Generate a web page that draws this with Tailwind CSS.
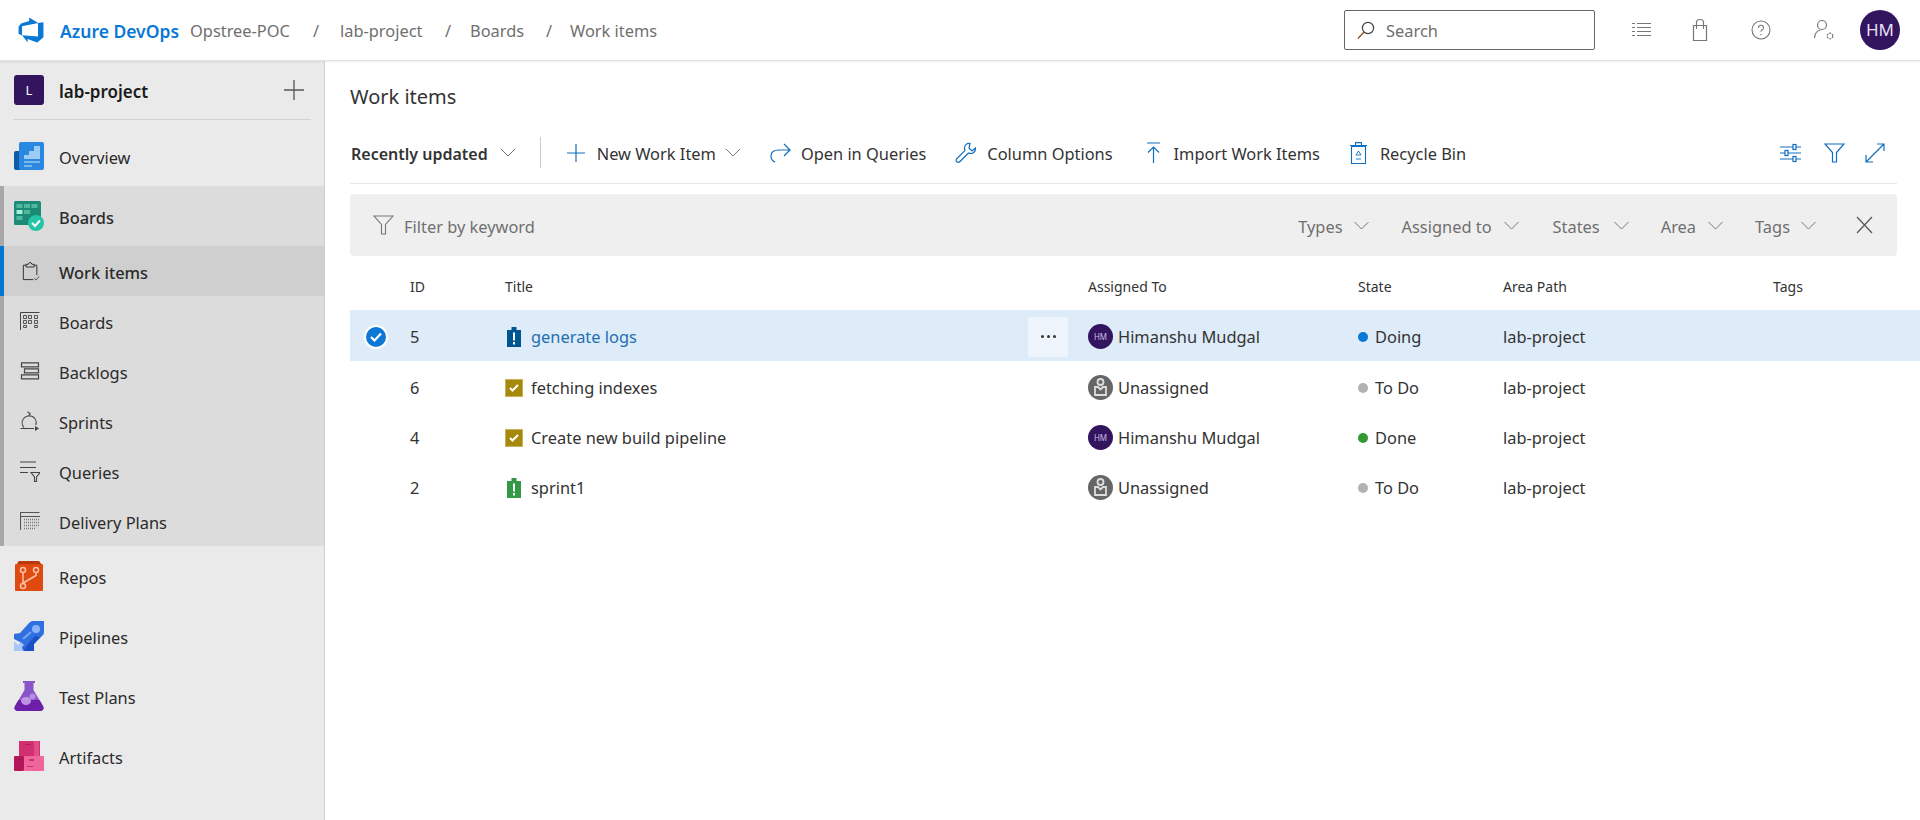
<!doctype html>
<html lang="en"><head><meta charset="utf-8"><title>Work items</title>
<script src="https://cdn.jsdelivr.net/npm/@tailwindcss/browser@4"></script></head>
<body class="h-screen overflow-hidden bg-white font-['Noto_Sans','Open_Sans',sans-serif] text-[#333] text-[16.4px] leading-[24px]">
<header class="h-[61px] flex items-center border-b border-[#e3e3e3] shadow-[0_1px_2px_rgba(0,0,0,0.08)] relative z-10 bg-white [&>span]:mt-[2px]">
  <svg class="ml-[17px] w-[28px] h-[28px]" viewBox="0 0 18 18"><path fill="#0a78d4" d="M17 4v9.74l-4 3.28-6.2-2.26V17L3.29 12.41l10.23.8V4.44Zm-3.41.49L7.85 1V3.29L2.58 4.84 1 6.87v4.61l2.26 1V6.57Z"/></svg>
  <span class="ml-[15px] w-[130px] font-semibold text-[#0a78d4] text-[17.5px] whitespace-nowrap">Azure DevOps</span>
  <span class="text-[#6f6f6f] w-[123px] whitespace-nowrap">Opstree-POC</span>
  <span class="text-[#6f6f6f] w-[27px]">/</span>
  <span class="text-[#6f6f6f] w-[105px] whitespace-nowrap">lab-project</span>
  <span class="text-[#6f6f6f] w-[25px]">/</span>
  <span class="text-[#6f6f6f] w-[76px]">Boards</span>
  <span class="text-[#6f6f6f] w-[24px]">/</span>
  <span class="text-[#6f6f6f] whitespace-nowrap">Work items</span>
  <div class="ml-auto w-[251px] h-[40px] border border-[#666] rounded-[2px] flex items-center pl-[11px] text-[#6f6f6f]">
    <svg class="w-[20px] h-[20px]" viewBox="0 0 20 20" fill="none" stroke="#444" stroke-width="1.2"><circle cx="12" cy="8" r="5.6"/><path d="M8 12 2 18.500" stroke="#8a4a20"/></svg>
    <span class="ml-[10px] mt-[2px]">Search</span>
  </div>
  <svg class="ml-[35px] w-[22px] h-[20px]" viewBox="0 0 22 20" fill="none" stroke="#777" stroke-width="1.2"><path d="M7 3.500h14M7 7.500h14M7 11.500h14M7 15.500h14M2 3.500h3M2 7.500h3M2 11.500h3M2 15.500h3"/></svg>
  <svg class="ml-[38px] w-[20px] h-[24px]" viewBox="0 0 20 24" fill="none" stroke="#777" stroke-width="1.2"><path d="M3.500 7.500h13v15h-13zM6.500 11V4.500q0-3 3.500-3t3.500 3V11"/></svg>
  <svg class="ml-[41px] w-[20px] h-[20px]" viewBox="0 0 20 20" fill="none" stroke="#777" stroke-width="1.1"><circle cx="10" cy="10" r="9"/><path d="M7.500 8q0-2.700 2.500-2.700t2.500 2.400q0 1.300-1.400 2.100-1.100.7-1.100 2"/><path d="M10 14v1.300"/></svg>
  <svg class="ml-[41px] w-[24px] h-[24px]" viewBox="0 0 24 24" fill="none" stroke="#777" stroke-width="1.2"><circle cx="10" cy="7" r="4.500"/><path d="M2.500 20q.5-7 6-8"/><circle cx="18" cy="18" r="2.800" stroke-dasharray="2 1"/></svg>
  <div class="ml-[24px] mr-[20px] w-[40px] h-[40px] rounded-full bg-[#32145f] text-[#e8e0f2] flex items-center justify-center text-[17px]">HM</div>
</header>
<div class="flex h-[759px]">
  <aside class="w-[325px] shrink-0 bg-[#eaeaea] border-r border-[#d0d0d0] text-[#2b2b2b]">
    <div class="h-[59px] mx-[13px] flex items-center border-b border-[#d2d2d2]">
      <div class="w-[30px] h-[30px] ml-[1px] rounded-[3px] bg-[#32145f] text-white text-[13px] flex items-center justify-center">L</div>
      <span class="ml-[15px] mt-[4px] font-semibold text-[17px] text-[#1a1a1a]">lab-project</span>
      <svg class="ml-auto mr-[6px] w-[22px] h-[22px]" viewBox="0 0 22 22" stroke="#555" stroke-width="1.3"><path d="M11 1v20M1 11h20"/></svg>
    </div>
    <a class="h-[66px] flex items-center pl-[14px] gap-[15px] pt-[6px] [&>span]:mt-[3px]">
      <svg class="w-[30px] h-[28px]" viewBox="0 0 30 28"><rect x="0" y="9" width="10" height="19" rx="2" fill="#0f5ba8"/><rect x="5" y="0" width="25" height="28" rx="2" fill="#2b88e0"/><path d="M10 13h5V9h5V4h6v13H10z" fill="#9cccf5"/><path d="M10 19h16v2H10zM10 23h8v2h-8z" fill="#79b6ee"/></svg>
      <span>Overview</span>
    </a>
    <div class="bg-[#dcdcdc] border-l-4 border-[#a8a8a8] [&>a>span]:mt-[3px]">
      <a class="h-[60px] flex items-center pl-[10px] gap-[15px] font-medium">
        <svg class="w-[30px] h-[30px]" viewBox="0 0 30 30"><rect x="0" y="0" width="27" height="24" rx="1.500" fill="#1c8a74"/><path d="M2.500 3h6v4h-6zM10 3h6v4h-6zM17.500 3h6v4h-6zM10 9h6v4h-6zM2.500 15h6v4h-6z" fill="#4db7a0"/><path d="M2.500 9h6v4h-6z" fill="#a4f0dc"/><circle cx="22" cy="22" r="8" fill="#26c4a6"/><path d="M18 22l3 3 5-5.500" stroke="#fff" stroke-width="2" fill="none"/></svg>
        <span>Boards</span>
      </a>
      <a class="h-[50px] -ml-1 flex items-center border-l-4 border-[#0078d4] bg-[#cfcfcf] pl-[18px] gap-[19px] font-medium">
        <svg class="w-[18px] h-[21px]" viewBox="0 0 20 21" fill="none" stroke="#333" stroke-width="1.1"><path d="M4.500 3.500H1.500v16h11M13.500 3.500h3v11M4.500 5.500v-3h2.500q.5-2 2-2t2 2h2.500v3z"/><path d="M13.500 18l2 2 3.500-4" stroke="#555"/></svg>
        <span>Work items</span>
      </a>
      <a class="h-[50px] flex items-center pl-[16px] gap-[19px]">
        <svg class="w-[20px] h-[18px]" viewBox="0 0 20 18" fill="none" stroke="#444"><path d="M.500 18V.500h19" /><path d="M3.500 3.500h3v3h-3zM8.500 3.500h3v3h-3zM14.500 3.500h3v3h-3zM3.500 8.500h3v3h-3zM8.500 8.500h3v3h-3zM14.500 8.500h3v3h-3zM3.500 13.500h3v2h-3zM14.500 13.500h3v2h-3z" stroke-width=".9"/></svg>
        <span>Boards</span>
      </a>
      <a class="h-[50px] flex items-center pl-[16px] gap-[19px]">
        <svg class="w-[20px] h-[18px]" viewBox="0 0 20 18" fill="none" stroke="#444" stroke-width="1.200"><path d="M1.500.800h17v4h-17zM4.500 6.800h14v4h-14zM1.500 12.800h17v4h-17z"/></svg>
        <span>Backlogs</span>
      </a>
      <a class="h-[50px] flex items-center pl-[16px] gap-[19px]">
        <svg class="w-[20px] h-[20px]" viewBox="0 0 20 20" fill="none" stroke="#444" stroke-width="1.100"><path d="M4 16.500A7 7 0 1 1 15.800 14M7.500 .8 10.200 2.900 8 5.500M.5 17.500h13.500"/><path d="M15 15l4 2.500-4 2.500z" fill="#444" stroke="none"/></svg>
        <span>Sprints</span>
      </a>
      <a class="h-[50px] flex items-center pl-[16px] gap-[19px]">
        <svg class="w-[20px] h-[21px]" viewBox="0 0 20 21" fill="none" stroke="#444" stroke-width="1.100"><path d="M0 1h16M0 6.500h16M0 11.500h8M11 11.500h9l-3.500 4.500v4.500h-2V16z"/></svg>
        <span>Queries</span>
      </a>
      <a class="h-[50px] flex items-center pl-[16px] gap-[19px]">
        <svg class="w-[20px] h-[18px]" viewBox="0 0 20 18" fill="none" stroke="#555"><path d="M.500 18V.500h19M1 4.500h19" stroke-width="1.100"/><path d="M4 7.500h15M4 10.500h15M4 13.500h15M4 16.500h11" stroke-dasharray="1 1" stroke-width="1.300" stroke="#777"/></svg>
        <span>Delivery Plans</span>
      </a>
    </div>
    <div class="[&>a>span]:mt-[3px]">
    <a class="h-[60px] flex items-center pl-[14px] gap-[15px]">
      <svg class="w-[30px] h-[30px]" viewBox="0 0 30 30"><path d="M1 4q0-1 1-1h1l2-3h20l2 3h1q1 0 1 1v25q0 1-1 1H2q-1 0-1-1z" fill="#df4a10"/><path d="M5 0h20l2 3H3z" fill="#b83a0a"/><g fill="none" stroke="#ffc0a5" stroke-width="1.500"><circle cx="9" cy="9" r="2.500"/><circle cx="22" cy="9" r="2.500"/><circle cx="9" cy="25" r="2.500"/><path d="M9 11.500v11M22 11.500v3l-12 7"/></g></svg>
      <span>Repos</span>
    </a>
    <a class="h-[60px] flex items-center pl-[14px] gap-[15px]">
      <svg class="w-[30px] h-[30px]" viewBox="0 0 30 30"><path d="M30 0v11q0 2-1.500 3.500L20 23v7H9l-3-9-6-3V13l6-1 9-10q2-2 4-2z" fill="#2f6fe0"/><path d="M20 23v7H9l5-7 7-8 5 1z" fill="#1a50c4"/><circle cx="22" cy="8" r="4" fill="#8ab4f8"/><path d="M9 18l8-7" stroke="#7aa5f2" stroke-width="2"/><path d="M0 30V20l4 4 3-3 3 3-3 3 3 3z" fill="#a9c6fb"/></svg>
      <span>Pipelines</span>
    </a>
    <a class="h-[60px] flex items-center pl-[14px] gap-[15px]">
      <svg class="w-[30px] h-[30px]" viewBox="0 0 30 30"><path d="M9 0h12v2h-1.500v7L29 25q2 5-4 5H5q-6 0-4-5l9.500-16V2H9z" fill="#8a55c8"/><path d="M4.500 19h21l3.500 6q2 5-4 5H5q-6 0-4-5z" fill="#6d1fa8"/><ellipse cx="12" cy="20" rx="5" ry="4" fill="#c9a5ec" opacity=".85"/><circle cx="18.500" cy="15.500" r="3" fill="#c9a5ec" opacity=".7"/></svg>
      <span>Test Plans</span>
    </a>
    <a class="h-[60px] flex items-center pl-[14px] gap-[15px]">
      <svg class="w-[30px] h-[30px]" viewBox="0 0 30 30"><rect x="5" y="0" width="21" height="16" fill="#d12f6f"/><rect x="20" y="0" width="5" height="16" fill="#e24d88"/><rect x="0" y="15" width="10" height="15" rx="1" fill="#b3175a"/><rect x="10" y="15" width="20" height="15" rx="1" fill="#f0659b"/><path d="M11 3h6v1h-6zM4 18h4v1H4zM15 18h5v2h-5zM13 25h6v1h-6z" fill="#8f1048" opacity=".55"/></svg>
      <span>Artifacts</span>
    </a>
    </div>
  </aside>
  <main class="flex-1 min-w-0">
    <h1 class="pl-[25px] h-[61px] pt-[21px] text-[20px] leading-[30px] text-[#333]">Work items</h1>
    <div class="ml-[25px] mr-[23px] h-[62px] flex items-center border-b border-[#e8e8e8] text-[#333] whitespace-nowrap [&>span]:mt-[2px]">
      <span class="ml-[1px] font-semibold text-[16px]">Recently updated</span>
      <svg class="ml-[12px] w-[16px] h-[9px]" viewBox="0 0 16 9" fill="none" stroke="#777"><path d="M1 1l7 7 7-7"/></svg>
      <div class="ml-[24px] w-px h-[31px] bg-[#ccc]"></div>
      <svg class="ml-[26px] w-[18px] h-[18px]" viewBox="0 0 18 18" stroke="#106ebe" stroke-width="1.200"><path d="M9 0v18M0 9h18"/></svg>
      <span class="ml-[12px]">New Work Item</span>
      <svg class="ml-[9px] w-[16px] h-[9px]" viewBox="0 0 16 9" fill="none" stroke="#777"><path d="M1 1l7 7 7-7"/></svg>
      <svg class="ml-[29px] w-[21px] h-[20px]" viewBox="0 0 21 20" fill="none" stroke="#106ebe" stroke-width="1.200"><path d="M14 1l6 6-6 6M20 7H9q-8 0-8 6v1q0 3 4 5"/></svg>
      <span class="ml-[10px]">Open in Queries</span>
      <svg class="ml-[29px] w-[21px] h-[21px]" viewBox="0 0 21 21" fill="none" stroke="#106ebe" stroke-width="1.200"><path d="M15 1.500q-5-.5-5.500 4.500 0 1.500.5 2.500L1.500 17q-1 2 .5 3t3-.5l8.500-8.500q1.500.5 3 .5 4-1 4-5.500l-3.500 3L14 6z"/></svg>
      <span class="ml-[11px]">Column Options</span>
      <svg class="ml-[32px] w-[17px] h-[21px]" viewBox="0 0 17 21" fill="none" stroke="#106ebe" stroke-width="1.200"><path d="M2 1h13M8.500 21V5M3 10.500l5.500-5.500 5.500 5.500"/></svg>
      <span class="ml-[12px]">Import Work Items</span>
      <svg class="ml-[30px] w-[17px] h-[22px]" viewBox="0 0 17 22" fill="none" stroke="#106ebe" stroke-width="1.100"><path d="M1.500 4.500h14v17h-14zM0 3.500h17M5.500 3.500V.600h6v2.900"/><path d="M6 13l2.500-4 2.500 4zM6 17h5" stroke-width=".9"/></svg>
      <span class="ml-[13px]">Recycle Bin</span>
      <svg class="ml-auto w-[21px] h-[20px]" viewBox="0 0 21 20" fill="none" stroke="#106ebe" stroke-width="1.200"><path d="M0 4h21M0 10h21M0 16h21"/><rect x="13" y="1.500" width="3" height="5" fill="#fff"/><rect x="5" y="7.500" width="3" height="5" fill="#fff"/><rect x="13" y="13.500" width="3" height="5" fill="#fff"/></svg>
      <svg class="ml-[23px] w-[21px] h-[20px]" viewBox="0 0 21 20" fill="none" stroke="#106ebe" stroke-width="1.200"><path d="M1 1h19l-7.500 8.500V19h-4V9.500z"/></svg>
      <svg class="ml-[20px] mr-[12px] w-[20px] h-[20px]" viewBox="0 0 20 20" fill="none" stroke="#106ebe" stroke-width="1.200"><path d="M1 19 19 1M12 1h7v7M1 12v7h7"/></svg>
    </div>
    <div class="ml-[25px] mr-[23px] mt-[10px] h-[62px] rounded-[4px] bg-[#efefef] flex items-center text-[#6f6f6f] whitespace-nowrap [&>span]:mt-[3px]">
      <svg class="ml-[23px] w-[21px] h-[20px]" viewBox="0 0 21 20" fill="none" stroke="#777" stroke-width="1.100"><path d="M1 1h19l-7.500 8.500V19h-4V9.500z"/></svg>
      <span class="ml-[10px]">Filter by keyword</span>
      <span class="ml-auto">Types</span>
      <svg class="ml-[10px] w-[17px] h-[9px]" viewBox="0 0 16 9" fill="none" stroke="#777"><path d="M1 1l7 7 7-7"/></svg>
      <span class="ml-[32px]">Assigned to</span>
      <svg class="ml-[11px] w-[17px] h-[9px]" viewBox="0 0 16 9" fill="none" stroke="#777"><path d="M1 1l7 7 7-7"/></svg>
      <span class="ml-[33px]">States</span>
      <svg class="ml-[13px] w-[17px] h-[9px]" viewBox="0 0 16 9" fill="none" stroke="#777"><path d="M1 1l7 7 7-7"/></svg>
      <span class="ml-[31px]">Area</span>
      <svg class="ml-[11px] w-[17px] h-[9px]" viewBox="0 0 16 9" fill="none" stroke="#777"><path d="M1 1l7 7 7-7"/></svg>
      <span class="ml-[31px]">Tags</span>
      <svg class="ml-[10px] w-[17px] h-[9px]" viewBox="0 0 16 9" fill="none" stroke="#777"><path d="M1 1l7 7 7-7"/></svg>
      <svg class="ml-[38px] mr-[24px] w-[18px] h-[18px]" viewBox="0 0 18 18" stroke="#555" stroke-width="1.200"><path d="M2 1l15 16M17 1 2 17"/></svg>
    </div>
    <div class="mt-[12px] mb-[4px] ml-[25px] grid grid-cols-[60px_95px_583px_270px_145px_270px_1fr] items-center h-[38px] text-[14px] text-[#333]">
      <span></span><span>ID</span><span>Title</span><span>Assigned To</span><span>State</span><span>Area Path</span><span>Tags</span>
    </div>
    <div class="ml-[25px] grid grid-cols-[60px_95px_583px_270px_145px_270px_1fr] items-center h-[51px] bg-[#deebf8] pt-[2px]">
      <span class="pl-[14px]"><span class="w-[24px] h-[24px] rounded-full bg-[#0a78d4] border-2 border-white flex items-center justify-center"><svg class="w-[12px] h-[10px]" viewBox="0 0 12 10" fill="none" stroke="#fff" stroke-width="2.200"><path d="M1 5l3.500 3.500L11 1.500"/></svg></span></span>
      <span>5</span>
      <span class="relative flex items-center">
        <svg class="w-[16px] h-[20px] ml-[1px]" viewBox="0 0 16 20"><path d="M1 3h4.500V0h5v3H15v17H1z" fill="#00578f"/><path d="M7 5.500h2v8H7zM7 15h2v2.500H7z" fill="#fff"/></svg>
        <span class="ml-[9px] text-[#1e6fb0]">generate logs</span>
        <span class="absolute left-[523px] top-1/2 -translate-y-1/2 w-[40px] h-[40px] rounded-[2px] bg-[#edf4fc] flex items-center justify-center gap-[3px]"><i class="w-[3px] h-[3px] rounded-full bg-[#333]"></i><i class="w-[3px] h-[3px] rounded-full bg-[#333]"></i><i class="w-[3px] h-[3px] rounded-full bg-[#333]"></i></span>
      </span>
      <span class="flex items-center"><span class="w-[25px] h-[25px] rounded-full bg-[#32145f] text-[#cdbfe0] text-[8px] flex items-center justify-center">HM</span><span class="ml-[5px]">Himanshu Mudgal</span></span>
      <span class="flex items-center"><i class="w-[10px] h-[10px] rounded-full bg-[#0a78d4]"></i><span class="ml-[7px]">Doing</span></span>
      <span>lab-project</span><span></span>
    </div>
    <div class="ml-[25px] grid grid-cols-[60px_95px_583px_270px_145px_270px_1fr] items-center h-[50px] pt-[3px]">
      <span></span><span>6</span>
      <span class="flex items-center"><span class="w-[18px] h-[18px] bg-[#a6880c] border border-[#c9b25a] flex items-center justify-center"><svg class="w-[10px] h-[8px]" viewBox="0 0 10 8" fill="none" stroke="#fff" stroke-width="2"><path d="M1 4l2.500 2.500L9 1"/></svg></span><span class="ml-[8px]">fetching indexes</span></span>
      <span class="flex items-center"><svg class="w-[25px] h-[25px]" viewBox="0 0 25 25"><circle cx="12.500" cy="12.500" r="12.500" fill="#666"/><circle cx="12.500" cy="7" r="3" fill="none" stroke="#ddd" stroke-width="1.800"/><path d="M7 12h3l2.500 2.500L15 12h3v8H7z" fill="none" stroke="#ddd" stroke-width="1.800"/></svg><span class="ml-[5px]">Unassigned</span></span>
      <span class="flex items-center"><i class="w-[10px] h-[10px] rounded-full bg-[#b2b2b2]"></i><span class="ml-[7px]">To Do</span></span>
      <span>lab-project</span><span></span>
    </div>
    <div class="ml-[25px] grid grid-cols-[60px_95px_583px_270px_145px_270px_1fr] items-center h-[50px] pt-[3px]">
      <span></span><span>4</span>
      <span class="flex items-center"><span class="w-[18px] h-[18px] bg-[#a6880c] border border-[#c9b25a] flex items-center justify-center"><svg class="w-[10px] h-[8px]" viewBox="0 0 10 8" fill="none" stroke="#fff" stroke-width="2"><path d="M1 4l2.500 2.500L9 1"/></svg></span><span class="ml-[8px]">Create new build pipeline</span></span>
      <span class="flex items-center"><span class="w-[25px] h-[25px] rounded-full bg-[#32145f] text-[#cdbfe0] text-[8px] flex items-center justify-center">HM</span><span class="ml-[5px]">Himanshu Mudgal</span></span>
      <span class="flex items-center"><i class="w-[10px] h-[10px] rounded-full bg-[#339933]"></i><span class="ml-[7px]">Done</span></span>
      <span>lab-project</span><span></span>
    </div>
    <div class="ml-[25px] grid grid-cols-[60px_95px_583px_270px_145px_270px_1fr] items-center h-[50px] pt-[3px]">
      <span></span><span>2</span>
      <span class="flex items-center"><svg class="w-[16px] h-[20px] ml-[1px]" viewBox="0 0 16 20"><path d="M1 3h4.500V0h5v3H15v17H1z" fill="#339947"/><path d="M7 5.500h2v8H7zM7 15h2v2.500H7z" fill="#fff"/></svg><span class="ml-[9px]">sprint1</span></span>
      <span class="flex items-center"><svg class="w-[25px] h-[25px]" viewBox="0 0 25 25"><circle cx="12.500" cy="12.500" r="12.500" fill="#666"/><circle cx="12.500" cy="7" r="3" fill="none" stroke="#ddd" stroke-width="1.800"/><path d="M7 12h3l2.500 2.500L15 12h3v8H7z" fill="none" stroke="#ddd" stroke-width="1.800"/></svg><span class="ml-[5px]">Unassigned</span></span>
      <span class="flex items-center"><i class="w-[10px] h-[10px] rounded-full bg-[#b2b2b2]"></i><span class="ml-[7px]">To Do</span></span>
      <span>lab-project</span><span></span>
    </div>
  </main>
</div>
</body></html>
